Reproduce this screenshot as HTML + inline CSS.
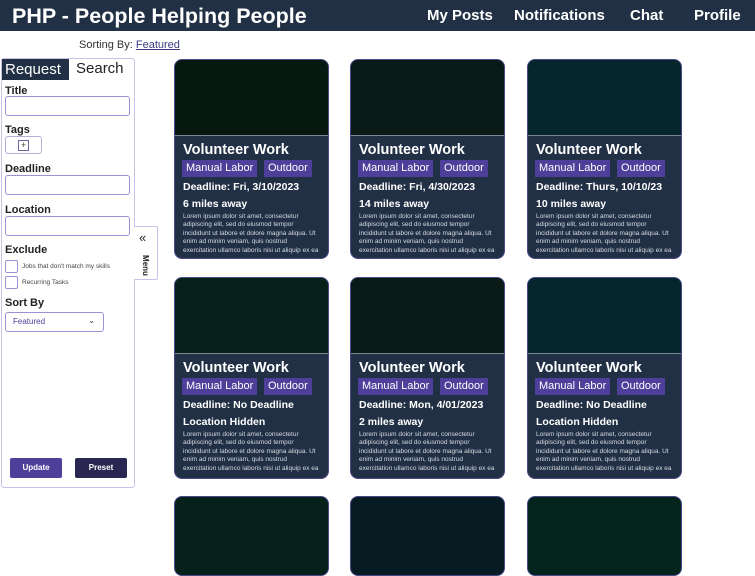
<!DOCTYPE html>
<html><head><meta charset="utf-8"><style>
*{box-sizing:border-box;margin:0;padding:0}
body{width:755px;height:536px;overflow:hidden;background:#fff;font-family:"Liberation Sans",Arial,sans-serif;position:relative;color:#222}
.hdr{position:absolute;left:0;top:0;width:755px;height:31px;background:#213044;color:#fff}
.hdr .t{position:absolute;left:12px;top:4px;font-size:21.5px;font-weight:bold}
.hdr .n{position:absolute;top:7px;font-size:15px;font-weight:bold}
.sort{position:absolute;left:79px;top:39px;font-size:11px;color:#333}
.sort u{color:#3b3a80}
.panel{position:absolute;left:1px;top:58px;width:134px;height:430px;border:1px solid #c8c3e6;border-radius:3px;background:#fff}
.tabA{position:absolute;left:0;top:0;width:67px;height:21px;background:#213044;color:#fff;font-size:15px;padding:2px 3px}
.tabB{position:absolute;left:74px;top:1px;font-size:15px;color:#222}
.lbl{position:absolute;left:3px;font-size:11px;font-weight:bold;color:#222}
.inp{position:absolute;left:3px;width:125px;height:20px;border:1px solid #9a93d3;border-radius:3px}
.cb{position:absolute;left:3px;width:13px;height:13px;border:1px solid #9a93d3;border-radius:2px}
.cbl{position:absolute;left:20px;font-size:6.5px;color:#444}
.btn{position:absolute;top:399px;width:52px;height:20px;border-radius:2px;color:#fff;font-size:8px;font-weight:bold;text-align:center;line-height:20px}
.menu{position:absolute;left:134px;top:226px;width:24px;height:54px;border:1px solid #c8c3e6;border-left:none;background:#fff;border-radius:0 2px 2px 0}
.card{position:absolute;width:155px;border:1px solid #4a4a8a;border-radius:8px;overflow:hidden;background:#223045;color:#fff}
.img{height:76px;border-bottom:1px solid #7d8694}
.ct{position:absolute;left:8px;font-size:14.5px;font-weight:bold}
.tg{position:absolute;height:17px;background:#4d3f9a;font-size:11px;line-height:17px;padding:0 4px}
.d{position:absolute;left:8px;font-size:10.5px;font-weight:bold}
.l{position:absolute;left:8px;width:146px;font-size:6.5px;line-height:8.4px;color:#d6dae2;white-space:nowrap}
</style></head><body>
<div class="hdr"><div class="t">PHP - People Helping People</div>
<div class="n" style="left:427px">My Posts</div><div class="n" style="left:514px">Notifications</div><div class="n" style="left:630px">Chat</div><div class="n" style="left:694px">Profile</div></div>
<div class="sort">Sorting By: <u>Featured</u></div>
<div class="panel">
<div class="tabA">Request</div><div class="tabB">Search</div>
<div class="lbl" style="top:26px">Title</div><div class="inp" style="top:37px"></div>
<div class="lbl" style="top:65px">Tags</div>
<div style="position:absolute;left:3px;top:77px;width:37px;height:18px;border:1px solid #b5b0da;border-radius:3px"><div style="position:absolute;left:12px;top:3px;width:11px;height:11px;border:1px solid #6a66a0;font-size:9px;line-height:9px;text-align:center;color:#444">+</div></div>
<div class="lbl" style="top:104px">Deadline</div><div class="inp" style="top:116px"></div>
<div class="lbl" style="top:145px">Location</div><div class="inp" style="top:157px"></div>
<div class="lbl" style="top:185px">Exclude</div>
<div class="cb" style="top:201px"></div><div class="cbl" style="top:204px">Jobs that don't match my skills</div>
<div class="cb" style="top:217px"></div><div class="cbl" style="top:220px">Recurring Tasks</div>
<div class="lbl" style="top:238px">Sort By</div>
<div class="inp" style="top:253px;width:99px;height:20px;font-size:8px;color:#4d3f9a;padding:4px 7px">Featured<span style="position:absolute;right:8px;top:3px;font-size:8px;color:#333">⌄</span></div>
<div class="btn" style="left:8px;background:#4d3f9a">Update</div>
<div class="btn" style="left:73px;background:#2a2652">Preset</div>
</div>
<div class="menu"><div style="position:absolute;left:5px;top:3px;font-size:13px;color:#222">«</div>
<div style="position:absolute;left:1px;top:34px;transform:rotate(90deg);font-size:8px;font-weight:bold;color:#222">Menu</div></div>

<!-- row 1 -->
<div class="card" style="left:174px;top:59px;height:200px"><div class="img" style="background:#061810"></div>
<div class="ct" style="top:82px">Volunteer Work</div><div class="tg" style="left:7px;top:100px">Manual Labor</div><div class="tg" style="left:89px;top:100px">Outdoor</div>
<div class="d" style="top:121px">Deadline: Fri, 3/10/2023</div><div class="d" style="top:138px">6 miles away</div>
<div class="l" style="top:153px">Lorem ipsum dolor sit amet, consectetur<br>adipiscing elit, sed do eiusmod tempor<br>incididunt ut labore et dolore magna aliqua. Ut<br>enim ad minim veniam, quis nostrud<br>exercitation ullamco laboris nisi ut aliquip ex ea</div></div>
<div class="card" style="left:350px;top:59px;height:200px"><div class="img" style="background:#0a1a16"></div>
<div class="ct" style="top:82px">Volunteer Work</div><div class="tg" style="left:7px;top:100px">Manual Labor</div><div class="tg" style="left:89px;top:100px">Outdoor</div>
<div class="d" style="top:121px">Deadline: Fri, 4/30/2023</div><div class="d" style="top:138px">14 miles away</div>
<div class="l" style="top:153px">Lorem ipsum dolor sit amet, consectetur<br>adipiscing elit, sed do eiusmod tempor<br>incididunt ut labore et dolore magna aliqua. Ut<br>enim ad minim veniam, quis nostrud<br>exercitation ullamco laboris nisi ut aliquip ex ea</div></div>
<div class="card" style="left:527px;top:59px;height:200px"><div class="img" style="background:#04262c"></div>
<div class="ct" style="top:82px">Volunteer Work</div><div class="tg" style="left:7px;top:100px">Manual Labor</div><div class="tg" style="left:89px;top:100px">Outdoor</div>
<div class="d" style="top:121px">Deadline: Thurs, 10/10/23</div><div class="d" style="top:138px">10 miles away</div>
<div class="l" style="top:153px">Lorem ipsum dolor sit amet, consectetur<br>adipiscing elit, sed do eiusmod tempor<br>incididunt ut labore et dolore magna aliqua. Ut<br>enim ad minim veniam, quis nostrud<br>exercitation ullamco laboris nisi ut aliquip ex ea</div></div>
<!-- row 2 -->
<div class="card" style="left:174px;top:277px;height:202px"><div class="img" style="background:#06201a"></div>
<div class="ct" style="top:82px">Volunteer Work</div><div class="tg" style="left:7px;top:100px">Manual Labor</div><div class="tg" style="left:89px;top:100px">Outdoor</div>
<div class="d" style="top:121px">Deadline: No Deadline</div><div class="d" style="top:138px">Location Hidden</div>
<div class="l" style="top:153px">Lorem ipsum dolor sit amet, consectetur<br>adipiscing elit, sed do eiusmod tempor<br>incididunt ut labore et dolore magna aliqua. Ut<br>enim ad minim veniam, quis nostrud<br>exercitation ullamco laboris nisi ut aliquip ex ea</div></div>
<div class="card" style="left:350px;top:277px;height:202px"><div class="img" style="background:#0a1a16"></div>
<div class="ct" style="top:82px">Volunteer Work</div><div class="tg" style="left:7px;top:100px">Manual Labor</div><div class="tg" style="left:89px;top:100px">Outdoor</div>
<div class="d" style="top:121px">Deadline: Mon, 4/01/2023</div><div class="d" style="top:138px">2 miles away</div>
<div class="l" style="top:153px">Lorem ipsum dolor sit amet, consectetur<br>adipiscing elit, sed do eiusmod tempor<br>incididunt ut labore et dolore magna aliqua. Ut<br>enim ad minim veniam, quis nostrud<br>exercitation ullamco laboris nisi ut aliquip ex ea</div></div>
<div class="card" style="left:527px;top:277px;height:202px"><div class="img" style="background:#04262c"></div>
<div class="ct" style="top:82px">Volunteer Work</div><div class="tg" style="left:7px;top:100px">Manual Labor</div><div class="tg" style="left:89px;top:100px">Outdoor</div>
<div class="d" style="top:121px">Deadline: No Deadline</div><div class="d" style="top:138px">Location Hidden</div>
<div class="l" style="top:153px">Lorem ipsum dolor sit amet, consectetur<br>adipiscing elit, sed do eiusmod tempor<br>incididunt ut labore et dolore magna aliqua. Ut<br>enim ad minim veniam, quis nostrud<br>exercitation ullamco laboris nisi ut aliquip ex ea</div></div>
<!-- row 3 -->
<div class="card" style="left:174px;top:496px;height:80px;background:#06201a"></div>
<div class="card" style="left:350px;top:496px;height:80px;background:#071c22"></div>
<div class="card" style="left:527px;top:496px;height:80px;background:#06241e"></div>
</body></html>
